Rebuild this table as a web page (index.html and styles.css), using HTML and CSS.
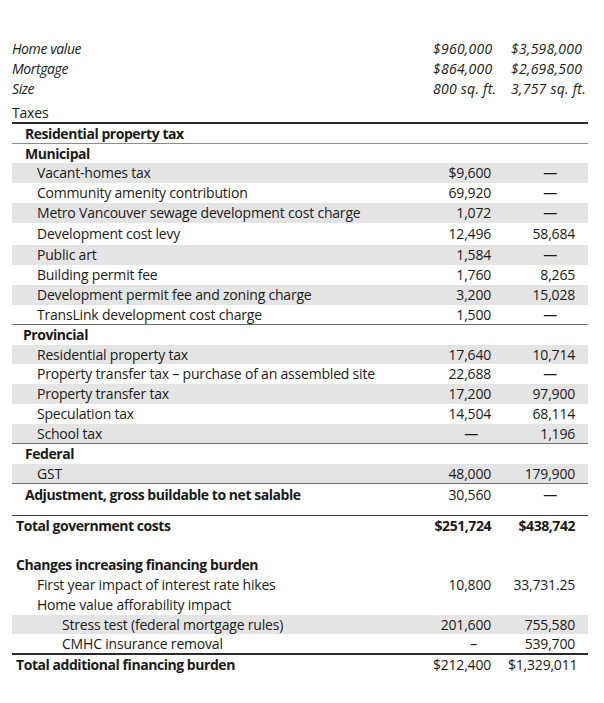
FILE: index.html
```html
<!DOCTYPE html>
<html>
<head>
<meta charset="utf-8">
<link rel="stylesheet" href="styles.css">
</head>
<body>
<table class="costs">
  <colgroup><col class="c-label"><col class="c-num"><col class="c-num2"></colgroup>
  <tbody>
    <tr class="hdr"><td>Home value</td><td>$960,000</td><td>$3,598,000</td></tr>
    <tr class="hdr"><td>Mortgage</td><td>$864,000</td><td>$2,698,500</td></tr>
    <tr class="hdr"><td>Size</td><td>800 sq. ft.</td><td>3,757 sq. ft.</td></tr>
    <tr class="taxes"><td>Taxes</td><td>&nbsp;</td><td>&nbsp;</td></tr>
    <tr class="sec rule-light h19"><td class="l1">Residential property tax</td><td></td><td></td></tr>
    <tr class="sec h19"><td class="l1">Municipal</td><td></td><td></td></tr>
    <tr class="shade"><td class="l2">Vacant-homes tax</td><td>$9,600</td><td class="dash">—</td></tr>
    <tr><td class="l2">Community amenity contribution</td><td>69,920</td><td class="dash">—</td></tr>
    <tr class="shade"><td class="l2">Metro Vancouver sewage development cost charge</td><td>1,072</td><td class="dash">—</td></tr>
    <tr class="h22"><td class="l2">Development cost levy</td><td>12,496</td><td>58,684</td></tr>
    <tr class="shade"><td class="l2">Public art</td><td>1,584</td><td class="dash">—</td></tr>
    <tr><td class="l2">Building permit fee</td><td>1,760</td><td>8,265</td></tr>
    <tr class="shade"><td class="l2">Development permit fee and zoning charge</td><td>3,200</td><td>15,028</td></tr>
    <tr class="rule h19"><td class="l2">TransLink development cost charge</td><td>1,500</td><td class="dash">—</td></tr>
    <tr class="sec"><td class="l1 prov">Provincial</td><td></td><td></td></tr>
    <tr class="shade h19"><td class="l2">Residential property tax</td><td>17,640</td><td>10,714</td></tr>
    <tr><td class="l2">Property transfer tax – purchase of an assembled site</td><td>22,688</td><td class="dash">—</td></tr>
    <tr class="shade"><td class="l2">Property transfer tax</td><td>17,200</td><td>97,900</td></tr>
    <tr><td class="l2">Speculation tax</td><td>14,504</td><td>68,114</td></tr>
    <tr class="shade rule h19"><td class="l2">School tax</td><td class="dash">—</td><td>1,196</td></tr>
    <tr class="sec"><td class="l1">Federal</td><td></td><td></td></tr>
    <tr class="shade rule h19"><td class="l2">GST</td><td>48,000</td><td>179,900</td></tr>
    <tr class="sec h21"><td class="l1">Adjustment, gross buildable to net salable</td><td class="reg">30,560</td><td class="reg dash">—</td></tr>
    <tr class="spacer rule-dark"><td>&nbsp;</td><td>&nbsp;</td><td>&nbsp;</td></tr>
    <tr class="sec total h19"><td class="l0">Total government costs</td><td>$251,724</td><td>$438,742</td></tr>
    <tr class="blank"><td>&nbsp;</td><td>&nbsp;</td><td>&nbsp;</td></tr>
    <tr class="sec"><td class="l0">Changes increasing financing burden</td><td></td><td></td></tr>
    <tr><td class="l2">First year impact of interest rate hikes</td><td>10,800</td><td>33,731.25</td></tr>
    <tr><td class="l2">Home value afforability impact</td><td></td><td></td></tr>
    <tr class="shade h19"><td class="l3">Stress test (federal mortgage rules)</td><td>201,600</td><td>755,580</td></tr>
    <tr class="rule-double h19"><td class="l3">CMHC insurance removal</td><td class="dash en">–</td><td>539,700</td></tr>
    <tr class="sec"><td class="l0">Total additional financing burden</td><td class="reg">$212,400</td><td class="reg">$1,329,011</td></tr>
  </tbody>
</table>
</body>
</html>
```

FILE: styles.css
```css
html, body {
  margin: 0;
  padding: 0;
  background: #ffffff;
}

body {
  padding: 39px 0 0 12px;
  font-family: "Open Sans", "Noto Sans", sans-serif;
  font-size: 14px;
  color: #1a1a1a;
}

.costs {
  border-collapse: separate;
  border-spacing: 0;
  width: 576px;
  table-layout: fixed;
  letter-spacing: -0.2px;
}

.c-label { width: 418px; }
.c-num { width: 78px; }
.c-num2 { width: 80px; }

.costs td {
  padding: 0;
  line-height: 20px;
  white-space: nowrap;
  vertical-align: middle;
}

.costs td:nth-child(2) {
  text-align: right;
  padding-right: 17px;
}

.costs td:nth-child(3) {
  text-align: right;
  padding-right: 13px;
}

.costs td.dash:nth-child(2) { padding-right: 30px; }
.costs td.dash:nth-child(3) { padding-right: 31px; }
.costs td.dash.en:nth-child(2) { padding-right: 31px; }

.hdr td {
  font-style: italic;
  letter-spacing: -0.4px;
}

.hdr td:nth-child(2),
.hdr td:nth-child(3) {
  text-align: left;
  padding-left: 3px;
  padding-right: 0;
  letter-spacing: 0.25px;
}

.taxes td {
  padding-top: 5px;
  line-height: 18px;
  border-bottom: 2px solid #2a2a2a;
}

.h19 td { line-height: 19px; }
.h21 td { line-height: 21px; }
.h22 td { line-height: 22px; }

.rule-light td { border-bottom: 1px solid #8c8c8c; }
.rule td { border-bottom: 1px solid #6e6e6e; }
.rule-dark td { border-bottom: 1px solid #3a3a3a; }
.rule-double td { border-bottom: 2px solid #2a2a2a; }

.shade td { background: #e4e4e4; }

.spacer td { line-height: 10px; }

.sec td { font-weight: 700; letter-spacing: -0.45px; }
.sec td.reg { font-weight: 400; letter-spacing: -0.2px; }

.l0 { padding-left: 4px !important; }
.l1 { padding-left: 13px !important; }
.l1.prov { padding-left: 11px !important; }
.l2 { padding-left: 25px !important; }
.l3 { padding-left: 50px !important; }
```
